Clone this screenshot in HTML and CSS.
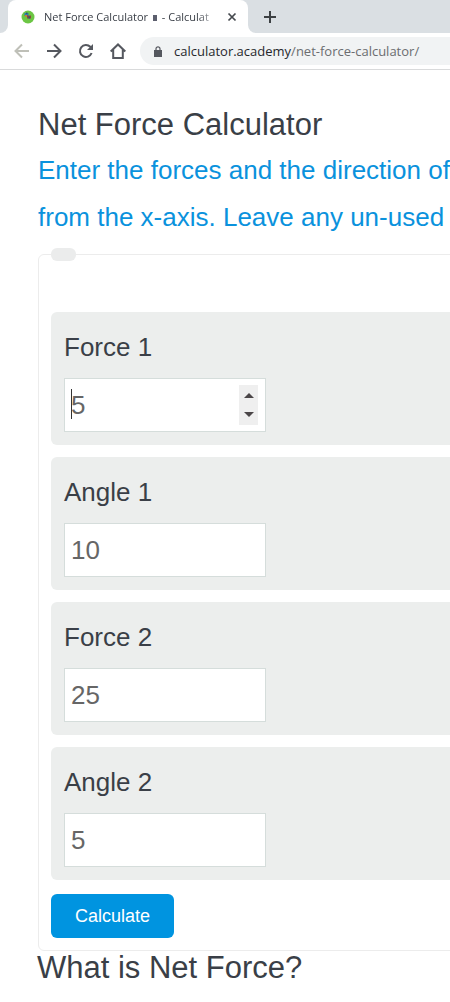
FILE: index.html
```html
<!DOCTYPE html>
<html lang="en">
<head>
    <meta charset="UTF-8">
    <meta name="viewport" content="width=device-width, initial-scale=1.0">
    <title>Net Force Calculator</title>
    <link rel="stylesheet" href="styles.css">
</head>
<body>

<header class="browser">
    <div class="tab-strip">
        <div class="tab-previous"></div>
        <div class="tab">
            <svg class="favicon" viewBox="0 0 14 14" aria-hidden="true">
                <circle cx="7" cy="7" r="6.5" fill="#6cc644"/>
                <path d="M3.500 3h4v3h-4z" fill="#2b7fae"/>
                <path d="M6 5.500h4v3H6z" fill="#8a4a3c"/>
                <path d="M5 2.500h1.500v1.500H5zM7.500 6.500H9v2H7.500z" fill="#34566f"/>
                <path d="M4 5h2v1.500H4z" fill="#e06a35"/>
            </svg>
            <span class="tab-title">Net Force Calculator <span class="tab-glyph"></span> - Calculat</span>
            <button class="icon-button" type="button" aria-label="Close tab">
                <svg width="10" height="10" viewBox="0 0 10 10"><path d="M1.500 1.500l7 7M8.500 1.500l-7 7" stroke="#45494e" stroke-width="1.700"/></svg>
            </button>
        </div>
        <button class="icon-button new-tab" type="button" aria-label="New tab">
            <svg width="12" height="12" viewBox="0 0 12 12"><path d="M6 0v12M0 6h12" stroke="#3c4043" stroke-width="2"/></svg>
        </button>
    </div>
    <div class="toolbar">
        <button class="icon-button" type="button" aria-label="Back">
            <svg width="16" height="16" viewBox="0 0 16 16" fill="none" stroke="#bfc0b8" stroke-width="2"><path d="M15 8H2M8 1.500L1.500 8 8 14.500"/></svg>
        </button>
        <button class="icon-button" type="button" aria-label="Forward">
            <svg width="16" height="16" viewBox="0 0 16 16" fill="none" stroke="#55585f" stroke-width="2"><path d="M1 8h13M8 1.500L14.500 8 8 14.500"/></svg>
        </button>
        <button class="icon-button" type="button" aria-label="Reload">
            <svg width="16" height="16" viewBox="0 0 16 16"><path d="M13.600 10A6 6 0 1 1 12.300 3.800L14 5.500" fill="none" stroke="#55585f" stroke-width="2"/><path d="M15 1v6H9z" fill="#55585f"/></svg>
        </button>
        <button class="icon-button" type="button" aria-label="Home">
            <svg width="16" height="16" viewBox="0 0 16 16" fill="none" stroke="#55585f" stroke-width="2"><path d="M.7 8.500L8 1.500l7.300 7M3.200 6.500V15h9.600V6.500"/></svg>
        </button>
        <div class="address-bar">
            <svg width="8" height="11" viewBox="0 0 8 11" aria-hidden="true"><path d="M0 4h8v7H0z" fill="#55585f"/><path d="M2 4.500V2.800a2 2 0 0 1 4 0v1.700" fill="none" stroke="#55585f" stroke-width="1.200"/></svg>
            <span class="url"><span class="url-host">calculator.academy</span>/net-force-calculator/</span>
        </div>
    </div>
</header>

<main class="page">
    <h1>Net Force Calculator</h1>
    <p class="intro">Enter the forces and the direction of<br>from the x-axis. Leave any un-used</p>

    <form>
        <fieldset class="calculator">
            <legend class="calculator-legend"></legend>
            <div class="field">
                <label for="force1">Force 1</label>
                <div class="field-control">
                    <input type="number" id="force1" value="5">
                    <span class="caret"></span>
                    <div class="spinner">
                        <svg width="10" height="5" viewBox="0 0 10 5"><path d="M0 5l5-5 5 5z" fill="#4b4648"/></svg>
                        <svg width="10" height="5" viewBox="0 0 10 5"><path d="M0 0l5 5 5-5z" fill="#4b4648"/></svg>
                    </div>
                </div>
            </div>
            <div class="field">
                <label for="angle1">Angle 1</label>
                <div class="field-control">
                    <input type="number" id="angle1" value="10">
                </div>
            </div>
            <div class="field">
                <label for="force2">Force 2</label>
                <div class="field-control">
                    <input type="number" id="force2" value="25">
                </div>
            </div>
            <div class="field">
                <label for="angle2">Angle 2</label>
                <div class="field-control">
                    <input type="number" id="angle2" value="5">
                </div>
            </div>
            <button class="calculate" type="button">Calculate</button>
        </fieldset>
    </form>

    <h2>What is Net Force?</h2>
</main>

</body>
</html>
```
FILE: styles.css
```css
* {
    box-sizing: border-box;
}

body {
    margin: 0;
    font-family: "Liberation Sans", Arial, sans-serif;
    color: #3a3f47;
    background-color: #fff;
}

.browser {
    font-family: "Open Sans", "Noto Sans", sans-serif;
    border-bottom: 1px solid #d9dadb;
}

.tab-strip {
    display: flex;
    height: 33px;
    background-color: #fff;
}

.tab-previous {
    width: 8px;
    background-color: #dadfe3;
    border-bottom-right-radius: 8px;
}

.tab {
    display: flex;
    align-items: center;
    width: 240px;
    padding: 0 11px 0 13px;
    background: linear-gradient(#dadfe3, #dadfe3) top / 100% 10px no-repeat;
    position: relative;
    z-index: 0;
}

.tab::before {
    content: "";
    position: absolute;
    inset: 0;
    z-index: -1;
    background-color: #fff;
    border-radius: 8px 8px 0 0;
}

.favicon {
    width: 14px;
    height: 14px;
    flex: none;
}

.tab-title {
    flex: 1;
    margin: 0 8px 0 9px;
    font-size: 11px;
    line-height: 32px;
    white-space: nowrap;
    -webkit-mask-image: linear-gradient(to right, #000 88%, transparent);
    mask-image: linear-gradient(to right, #000 88%, transparent);
}

.tab-glyph {
    display: inline-block;
    width: 4px;
    height: 6px;
    margin: 0 2px;
    background-color: #5c5f6e;
}

.icon-button {
    display: flex;
    align-items: center;
    justify-content: center;
    flex: none;
    padding: 0;
    border: none;
    background: none;
    cursor: pointer;
}

.new-tab {
    flex: 1;
    justify-content: flex-start;
    padding-left: 16px;
    background-color: #dadfe3;
    border-bottom-left-radius: 8px;
}

.toolbar {
    display: flex;
    align-items: center;
    gap: 16px;
    height: 36px;
    padding-left: 14px;
}

.address-bar {
    flex: 1;
    display: flex;
    align-items: center;
    gap: 12px;
    height: 28px;
    margin-left: -2px;
    padding-left: 14px;
    border-radius: 14px 0 0 14px;
    background-color: #f1f3f4;
}

.url {
    font-size: 13px;
    line-height: 28px;
    color: #6b6d70;
    white-space: nowrap;
}

.url-host {
    color: #26282c;
}

/* the page runs wider than the window and is cut at the right edge */
.page {
    padding: 34px 0 18px 37px;
    overflow: hidden;
}

h1,
h2 {
    margin: 0;
    font-size: 31px;
    font-weight: normal;
    white-space: nowrap;
}

h1 {
    margin-left: 1px;
    line-height: 42px;
}

h2 {
    line-height: 34px;
}

.intro {
    margin: 1px 0 7px 1px;
    font-size: 26px;
    line-height: 47px;
    color: #0a92dd;
    white-space: nowrap;
}

.calculator {
    min-width: 0;
    margin: 0 -20px 0 1px;
    padding: 51px 12px 12px;
    border: 1px solid #ececec;
    border-radius: 6px;
}

.calculator-legend {
    width: 25px;
    height: 13px;
    padding: 0;
    border-radius: 6px;
    background-color: #ebecec;
}

.field {
    margin-bottom: 12px;
    padding: 18px 13px 13px;
    border-radius: 6px;
    background-color: #eceeed;
}

.field label {
    display: block;
    margin-bottom: 14px;
    font-size: 26px;
    line-height: 34px;
}

.field-control {
    position: relative;
    width: 202px;
}

.field-control input {
    display: block;
    width: 100%;
    height: 54px;
    padding: 0 6px;
    border: 1px solid #d5dddb;
    border-radius: 0;
    background-color: #fff;
    font-family: inherit;
    font-size: 26px;
    color: #666;
    appearance: textfield;
    -moz-appearance: textfield;
}

.field-control input::-webkit-inner-spin-button {
    appearance: none;
    margin: 0;
}

.caret {
    position: absolute;
    top: 11px;
    left: 7px;
    width: 1px;
    height: 30px;
    background-color: #333;
}

.spinner {
    position: absolute;
    top: 7px;
    right: 8px;
    display: flex;
    flex-direction: column;
    align-items: center;
    justify-content: center;
    gap: 14px;
    width: 19px;
    height: 40px;
    background-color: #efefef;
}

.calculate {
    display: block;
    margin-top: 14px;
    padding: 0 24px;
    height: 44px;
    border: none;
    border-radius: 6px;
    background-color: #0094e0;
    color: #fff;
    font-family: inherit;
    font-size: 18px;
    cursor: pointer;
}
```
